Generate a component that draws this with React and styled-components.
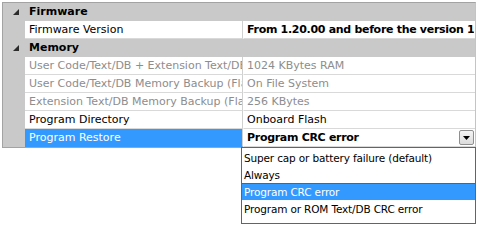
import React from 'react';
import styled, { createGlobalStyle } from 'styled-components';

const GlobalStyle = createGlobalStyle`
  html, body {
    margin: 0;
    padding: 0;
    background: #ffffff;
  }
  body {
    font-family: "DejaVu Sans", Verdana, sans-serif;
    font-size: 11px;
  }
`;

const sections = [
  {
    title: 'Firmware',
    rows: [
      { name: 'Firmware Version', value: 'From 1.20.00 and before the version 1.30.00', bold: true },
    ],
  },
  {
    title: 'Memory',
    rows: [
      { name: 'User Code/Text/DB + Extension Text/DB Memory', value: '1024 KBytes RAM', disabled: true },
      { name: 'User Code/Text/DB Memory Backup (Flash)', value: 'On File System', disabled: true },
      { name: 'Extension Text/DB Memory Backup (Flash)', value: '256 KBytes', disabled: true },
      { name: 'Program Directory', value: 'Onboard Flash' },
      { name: 'Program Restore', value: 'Program CRC error', selected: true, combo: true },
    ],
  },
];

const options = [
  'Super cap or battery failure (default)',
  'Always',
  'Program CRC error',
  'Program or ROM Text/DB CRC error',
];

function App() {
  return (
    <>
      <GlobalStyle />
      <Page>
        <Grid>
          {sections.map((section) => (
            <React.Fragment key={section.title}>
              <CategoryRow>
                <Expander>
                  <svg width="6" height="6" viewBox="0 0 6 6">
                    <polygon points="6,0 6,6 0,6" fill="#2b2b2b" />
                  </svg>
                </Expander>
                <CategoryTitle>{section.title}</CategoryTitle>
              </CategoryRow>
              {section.rows.map((row) => (
                <PropRow key={row.name}>
                  <Gutter />
                  <NameCell $selected={row.selected} $disabled={row.disabled}>
                    <Clip>{row.name}</Clip>
                  </NameCell>
                  <ValueCell $bold={row.bold || row.combo} $disabled={row.disabled}>
                    <Clip>{row.value}</Clip>
                    {row.combo && (
                      <ArrowButton>
                        <svg width="7" height="4" viewBox="0 0 7 4">
                          <polygon points="0,0 7,0 3.5,4" fill="#000" />
                        </svg>
                      </ArrowButton>
                    )}
                    {row.combo && (
                      <DropList>
                        {options.map((opt) => (
                          <Option key={opt} $active={opt === row.value}>
                            {opt}
                          </Option>
                        ))}
                      </DropList>
                    )}
                  </ValueCell>
                </PropRow>
              ))}
            </React.Fragment>
          ))}
        </Grid>
      </Page>
    </>
  );
}

export default App;

const Page = styled.div`
  padding: 2px 0 0 2px;
  width: 478px;
  height: 228px;
  box-sizing: border-box;
  overflow: hidden;
`;

const Grid = styled.div`
  width: 474px;
  border: 1px solid #a3a3a3;
  border-right-color: #c4c4c4;
  background: #c9c9c9;
  box-sizing: border-box;
  display: flex;
  flex-direction: column;
`;

const CategoryRow = styled.div`
  display: flex;
  align-items: center;
  height: 18px;
  background: #c9c9c9;
  border-bottom: 1px solid #c9c9c9;
  box-sizing: border-box;
`;

const Expander = styled.div`
  width: 22px;
  display: flex;
  justify-content: center;
  padding-left: 3px;
  box-sizing: border-box;
  svg {
    display: block;
  }
`;

const CategoryTitle = styled.div`
  padding-left: 4px;
  font-weight: bold;
  color: #000;
`;

const PropRow = styled.div`
  display: grid;
  grid-template-columns: 22px 218px 1fr;
  height: 18px;
`;

const Gutter = styled.div`
  background: #c9c9c9;
`;

const Clip = styled.span`
  flex: 1;
  min-width: 0;
  overflow: hidden;
  white-space: nowrap;
`;

const NameCell = styled.div`
  display: flex;
  align-items: center;
  padding-left: 4px;
  min-width: 0;
  overflow: hidden;
  border-bottom: 1px solid ${(p) => (p.$selected ? '#3399ff' : '#d9d9d9')};
  border-right: 1px solid #d0d0d0;
  background: ${(p) => (p.$selected ? '#3399ff' : '#ffffff')};
  color: ${(p) => (p.$selected ? '#ffffff' : p.$disabled ? '#8d8d8d' : '#000000')};
  box-sizing: border-box;
`;

const ValueCell = styled.div`
  position: relative;
  display: flex;
  align-items: center;
  padding-left: 3px;
  padding-right: 1px;
  background: #ffffff;
  border-bottom: 1px solid #d9d9d9;
  border-left: 1px solid #ffffff;
  box-sizing: border-box;
  min-width: 0;
  font-weight: ${(p) => (p.$bold ? 'bold' : 'normal')};
  color: ${(p) => (p.$disabled ? '#8d8d8d' : '#000000')};
  letter-spacing: ${(p) => (p.$bold ? '-0.3px' : '0')};
`;

const ArrowButton = styled.div`
  width: 15px;
  height: 15px;
  box-sizing: border-box;
  border: 1px solid #8f8f8f;
  border-radius: 2px;
  background: linear-gradient(#f4f4f4, #dcdcdc);
  display: flex;
  align-items: center;
  justify-content: center;
  svg {
    display: block;
    margin-top: 1px;
  }
`;

const DropList = styled.div`
  position: absolute;
  left: -3px;
  top: 18px;
  width: 235px;
  height: 77px;
  box-sizing: border-box;
  border: 1px solid #646464;
  background: #ffffff;
  padding-top: 1px;
  font-size: 10.5px;
  font-weight: normal;
  letter-spacing: -0.15px;
  z-index: 5;
`;

const Option = styled.div`
  height: 17px;
  display: flex;
  align-items: center;
  padding-left: 2px;
  box-sizing: border-box;
  color: ${(p) => (p.$active ? '#ffffff' : '#000000')};
  background: ${(p) => (p.$active ? '#3399ff' : 'transparent')};
  border-top: 1px solid ${(p) => (p.$active ? '#1f6fc8' : 'transparent')};
`;
